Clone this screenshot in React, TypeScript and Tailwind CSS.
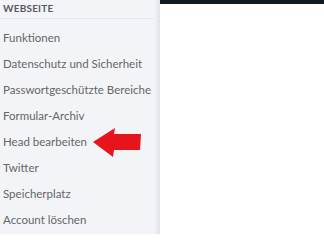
const items = [
  "Funktionen",
  "Datenschutz und Sicherheit",
  "Passwortgeschützte Bereiche",
  "Formular-Archiv",
  "Head bearbeiten",
  "Twitter",
  "Speicherplatz",
  "Account löschen",
];

function Arrow() {
  return (
    <svg width="50" height="30" viewBox="0 0 50 30" className="shrink-0">
      <path d="M0 14 L22 0 L21 6 L48 6 L47 22 L21 22 L20 29 Z" fill="#e8141c" />
    </svg>
  );
}

export default function App() {
  return (
    <div
      className="flex h-[234px] w-[324px] overflow-hidden bg-white"
      style={{ fontFamily: "Lato, 'Open Sans', sans-serif" }}
    >
      <aside className="relative w-[160px] shrink-0 bg-[#f3f4f8]">
        <div className="absolute inset-y-0 right-0 w-[6px] bg-gradient-to-r from-[#f3f4f8] to-[#e2e3e8]" />
        <div className="mr-[6px] border-b border-[#e6e7ec] pl-[3px] pt-[1px] pb-[3px] text-[10px] font-bold leading-[14px] tracking-[0.2px] text-[#5a5a5a]">
          WEBSEITE
        </div>
        <ul className="pt-[6px]">
          {items.map((label) => (
            <li
              key={label}
              className="flex h-[26px] items-center whitespace-nowrap pl-[3px] text-[11.5px] text-[#666]"
            >
              <span>{label}</span>
              {label === "Head bearbeiten" ? (
                <span className="ml-[6px] mt-[1px] flex">
                  <Arrow />
                </span>
              ) : null}
            </li>
          ))}
        </ul>
      </aside>
      <main className="flex-1">
        <div className="h-[4px] bg-[#0f1a22]" />
      </main>
    </div>
  );
}
